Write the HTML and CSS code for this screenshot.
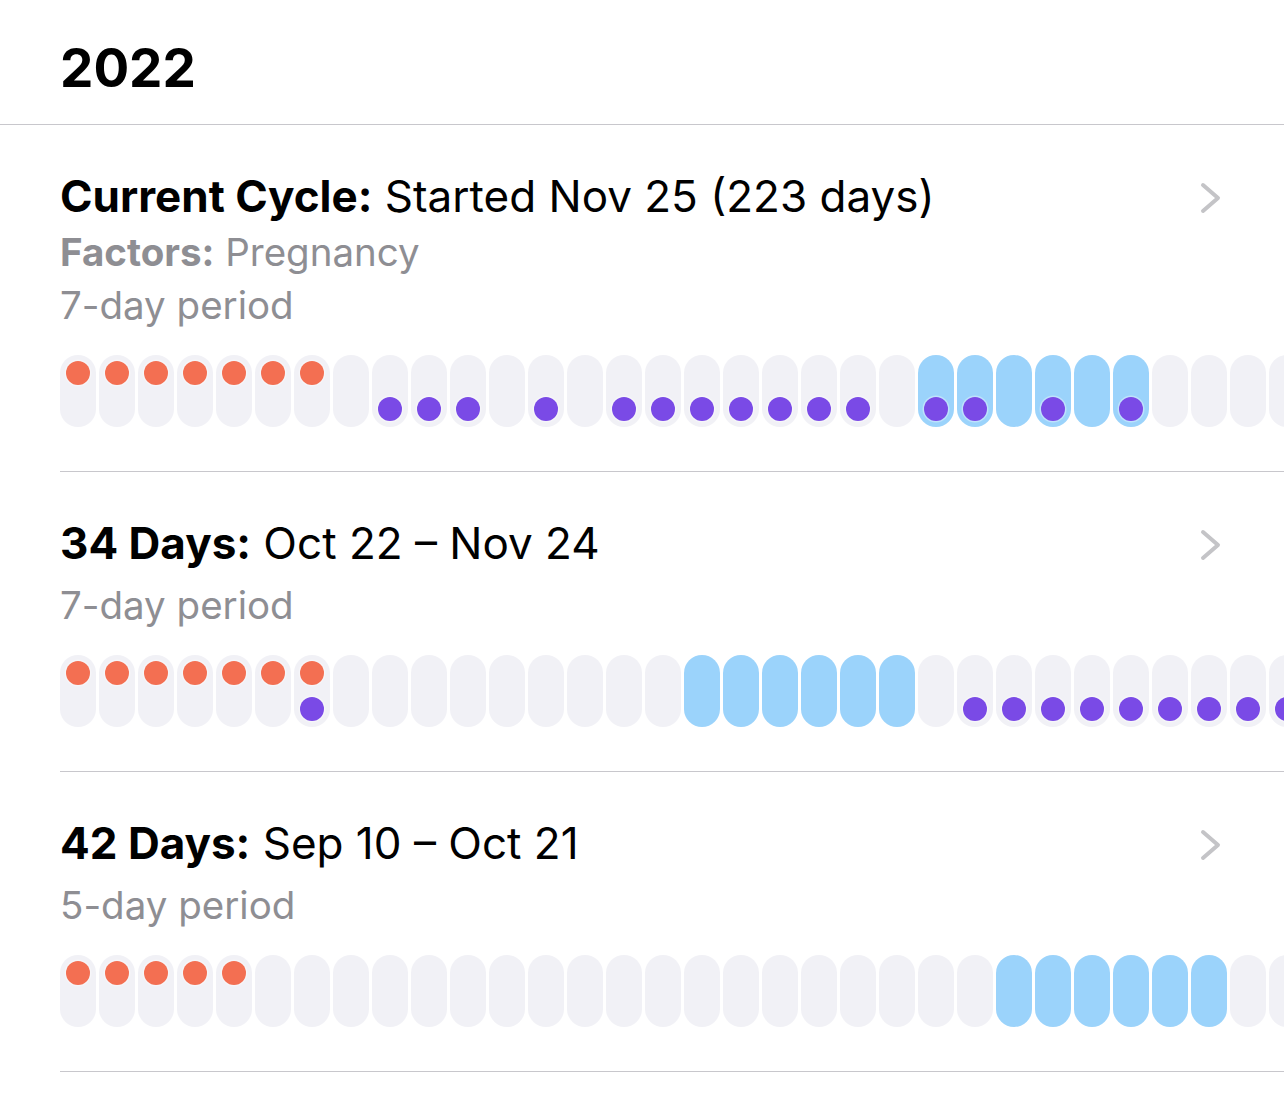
FILE: index.html
```html
<!DOCTYPE html>
<html lang="en">
<head>
<meta charset="utf-8">
<title>Cycle History 2022</title>
<link rel="stylesheet" href="styles.css">
</head>
<body>
<header class="year">2022</header>
<ul class="cycles">
  <li class="cycle">
    <div class="cycle-head">
      <div class="cycle-text">
        <div class="title"><b>Current Cycle:</b> Started Nov 25 (223 days)</div>
        <div class="sub factors"><b>Factors:</b> Pregnancy</div>
        <div class="sub">7-day period</div>
      </div>
      <svg class="chev" viewBox="0 0 22 32" width="22" height="32"><polyline points="3,3 18,16 3,29"/></svg>
    </div>
    <div class="days">
      <div class="d"><i class="r"></i></div>
      <div class="d"><i class="r"></i></div>
      <div class="d"><i class="r"></i></div>
      <div class="d"><i class="r"></i></div>
      <div class="d"><i class="r"></i></div>
      <div class="d"><i class="r"></i></div>
      <div class="d"><i class="r"></i></div>
      <div class="d"></div>
      <div class="d"><i class="p"></i></div>
      <div class="d"><i class="p"></i></div>
      <div class="d"><i class="p"></i></div>
      <div class="d"></div>
      <div class="d"><i class="p"></i></div>
      <div class="d"></div>
      <div class="d"><i class="p"></i></div>
      <div class="d"><i class="p"></i></div>
      <div class="d"><i class="p"></i></div>
      <div class="d"><i class="p"></i></div>
      <div class="d"><i class="p"></i></div>
      <div class="d"><i class="p"></i></div>
      <div class="d"><i class="p"></i></div>
      <div class="d"></div>
      <div class="d b"><i class="p"></i></div>
      <div class="d b"><i class="p"></i></div>
      <div class="d b"></div>
      <div class="d b"><i class="p"></i></div>
      <div class="d b"></div>
      <div class="d b"><i class="p"></i></div>
      <div class="d"></div>
      <div class="d"></div>
      <div class="d"></div>
      <div class="d"></div>
    </div>
  </li>
  <li class="cycle">
    <div class="cycle-head">
      <div class="cycle-text">
        <div class="title"><b>34 Days:</b> Oct 22 – Nov 24</div>
        <div class="sub period">7-day period</div>
      </div>
      <svg class="chev" viewBox="0 0 22 32" width="22" height="32"><polyline points="3,3 18,16 3,29"/></svg>
    </div>
    <div class="days">
      <div class="d"><i class="r"></i></div>
      <div class="d"><i class="r"></i></div>
      <div class="d"><i class="r"></i></div>
      <div class="d"><i class="r"></i></div>
      <div class="d"><i class="r"></i></div>
      <div class="d"><i class="r"></i></div>
      <div class="d"><i class="r"></i><i class="p"></i></div>
      <div class="d"></div>
      <div class="d"></div>
      <div class="d"></div>
      <div class="d"></div>
      <div class="d"></div>
      <div class="d"></div>
      <div class="d"></div>
      <div class="d"></div>
      <div class="d"></div>
      <div class="d b"></div>
      <div class="d b"></div>
      <div class="d b"></div>
      <div class="d b"></div>
      <div class="d b"></div>
      <div class="d b"></div>
      <div class="d"></div>
      <div class="d"><i class="p"></i></div>
      <div class="d"><i class="p"></i></div>
      <div class="d"><i class="p"></i></div>
      <div class="d"><i class="p"></i></div>
      <div class="d"><i class="p"></i></div>
      <div class="d"><i class="p"></i></div>
      <div class="d"><i class="p"></i></div>
      <div class="d"><i class="p"></i></div>
      <div class="d"><i class="p"></i></div>
    </div>
  </li>
  <li class="cycle">
    <div class="cycle-head">
      <div class="cycle-text">
        <div class="title"><b>42 Days:</b> Sep 10 – Oct 21</div>
        <div class="sub period">5-day period</div>
      </div>
      <svg class="chev" viewBox="0 0 22 32" width="22" height="32"><polyline points="3,3 18,16 3,29"/></svg>
    </div>
    <div class="days">
      <div class="d"><i class="r"></i></div>
      <div class="d"><i class="r"></i></div>
      <div class="d"><i class="r"></i></div>
      <div class="d"><i class="r"></i></div>
      <div class="d"><i class="r"></i></div>
      <div class="d"></div>
      <div class="d"></div>
      <div class="d"></div>
      <div class="d"></div>
      <div class="d"></div>
      <div class="d"></div>
      <div class="d"></div>
      <div class="d"></div>
      <div class="d"></div>
      <div class="d"></div>
      <div class="d"></div>
      <div class="d"></div>
      <div class="d"></div>
      <div class="d"></div>
      <div class="d"></div>
      <div class="d"></div>
      <div class="d"></div>
      <div class="d"></div>
      <div class="d"></div>
      <div class="d b"></div>
      <div class="d b"></div>
      <div class="d b"></div>
      <div class="d b"></div>
      <div class="d b"></div>
      <div class="d b"></div>
      <div class="d"></div>
      <div class="d"></div>
    </div>
  </li>
</ul>
</body>
</html>
```
FILE: styles.css
```css
html, body {
  margin: 0;
  padding: 0;
  background: #ffffff;
  overflow: hidden;
}
body {
  font-family: Inter, "Noto Sans", "Liberation Sans", sans-serif;
  color: #000000;
}
.year {
  font-size: 53px;
  font-weight: 700;
  line-height: 66px;
  padding: 35px 60px 23px;
  border-bottom: 1px solid #c8c7cc;
}
.cycles {
  list-style: none;
  margin: 0;
  padding: 0;
}
.cycle {
  margin-left: 60px;
  padding: 44px 0 44px;
  border-bottom: 1px solid #c8c7cc;
}
.cycle-head {
  display: flex;
  justify-content: space-between;
  align-items: flex-start;
  padding-right: 62px;
}
.cycle-text {
  flex: 1;
}
.title {
  font-size: 44px;
  line-height: 54px;
  font-weight: 400;
}
.title b {
  font-weight: 700;
}
.sub {
  font-size: 38.5px;
  line-height: 53px;
  color: #8e8e93;
}
.sub b {
  font-weight: 700;
}
.factors {
  margin-top: 3px;
}
.period {
  margin-top: 9px;
}
.chev {
  margin-top: 13px;
  flex: none;
}
.chev polyline {
  fill: none;
  stroke: #c4c4c7;
  stroke-width: 4;
  stroke-linecap: round;
  stroke-linejoin: round;
}
.days {
  display: flex;
  gap: 3px;
  margin-top: 23px;
  overflow: hidden;
}
.d {
  flex: none;
  width: 36px;
  height: 72px;
  box-sizing: border-box;
  padding: 6px;
  border-radius: 18px;
  background: #f1f1f6;
  display: flex;
  flex-direction: column;
}
.d.b {
  background: #9bd3fb;
}
.d i {
  display: block;
  width: 24px;
  height: 24px;
  border-radius: 50%;
  box-shadow: 0 0 0 1.5px rgba(255, 255, 255, 0.35);
}
.d i.r {
  background: #f36f52;
}
.d i.p {
  background: #7a4ae6;
  margin-top: auto;
}
```
